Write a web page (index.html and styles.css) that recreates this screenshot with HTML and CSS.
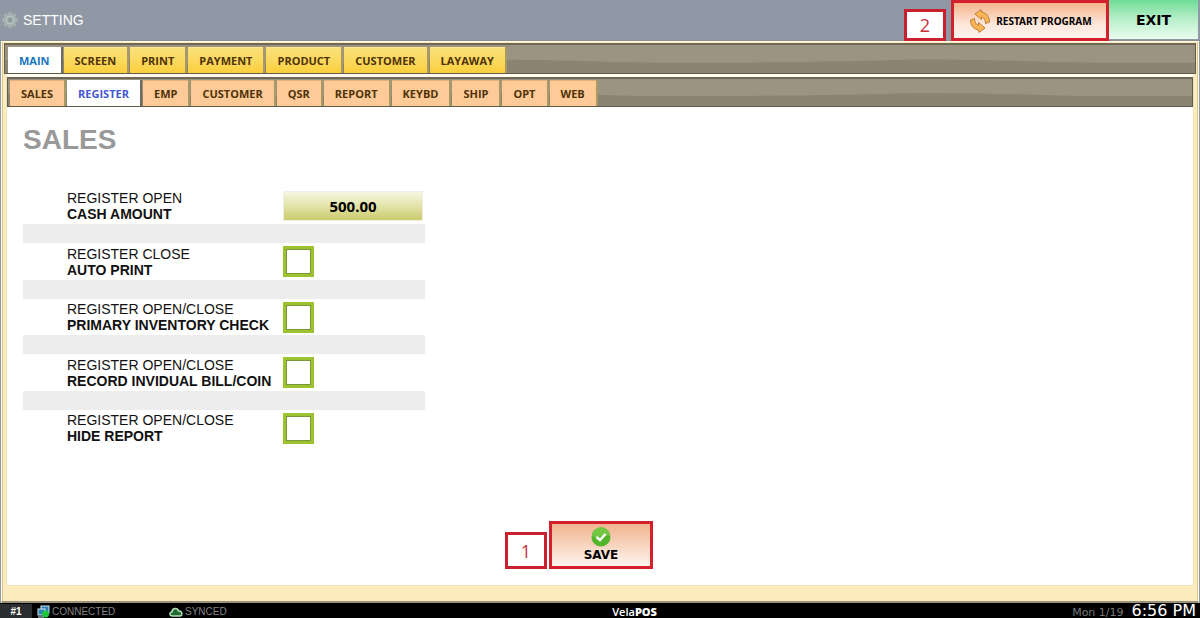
FILE: index.html
```html
<!DOCTYPE html>
<html lang="en">

<head>
  <meta charset="UTF-8">
  <meta name="viewport" content="width=device-width, initial-scale=1.0">
  <title>VelaPOS - Setting</title>
  <link rel="stylesheet" href="styles.css">
</head>

<body>
<header class="topbar">
  <svg class="gear" width="18" height="18" viewBox="0 0 18 18">
    <g fill="#a3b0ae">
      <rect x="7" y="1" width="4" height="16" rx="1"/>
      <rect x="7" y="1" width="4" height="16" rx="1" transform="rotate(45 9 9)"/>
      <rect x="7" y="1" width="4" height="16" rx="1" transform="rotate(90 9 9)"/>
      <rect x="7" y="1" width="4" height="16" rx="1" transform="rotate(135 9 9)"/>
      <circle cx="9" cy="9" r="6"/>
    </g>
    <circle cx="9" cy="9" r="4" fill="none" stroke="#bcc8c4"/>
    <circle cx="9" cy="9" r="2" fill="#8b969f"/>
  </svg>
  <span class="topbar-title">SETTING</span>
  <span class="step step-restart">2</span>
  <button class="btn-restart marked" type="button">
    <svg width="24" height="26" viewBox="0 0 24 26" fill="#fbb552" stroke="#b9803a" stroke-width="1" stroke-linejoin="round">
      <path d="M7 6L13 1.500L13.500 4C18 4.500 21.500 8.500 21.500 14L17.500 15.500C17.500 11.500 16 9.500 13.500 9L13.500 11.500Z"/>
      <path d="M17 20L11 24.500L10.500 22C6 21.500 2.500 17.500 2.500 12L6.500 10.500C6.500 14.500 8 16.500 10.500 17L10.500 14.500Z"/>
    </svg>
    RESTART PROGRAM
  </button>
  <button class="btn-exit" type="button">EXIT</button>
</header>

<main class="frame">
  <nav class="tabs tabs-main">
    <button class="tab active" type="button">MAIN</button>
    <button class="tab" type="button">SCREEN</button>
    <button class="tab" type="button">PRINT</button>
    <button class="tab" type="button">PAYMENT</button>
    <button class="tab" type="button">PRODUCT</button>
    <button class="tab" type="button">CUSTOMER</button>
    <button class="tab" type="button">LAYAWAY</button>
  </nav>
  <div class="inner">
    <nav class="tabs tabs-sub">
      <button class="tab" type="button">SALES</button>
      <button class="tab active" type="button">REGISTER</button>
      <button class="tab" type="button">EMP</button>
      <button class="tab" type="button">CUSTOMER</button>
      <button class="tab" type="button">QSR</button>
      <button class="tab" type="button">REPORT</button>
      <button class="tab" type="button">KEYBD</button>
      <button class="tab" type="button">SHIP</button>
      <button class="tab" type="button">OPT</button>
      <button class="tab" type="button">WEB</button>
    </nav>
    <form class="panel">
      <h1>SALES</h1>
      <div class="settings">
        <div class="setting">
          <label for="cash">REGISTER OPEN<b>CASH AMOUNT</b></label>
          <input class="amount" type="text" id="cash" value="500.00">
        </div>
        <div class="stripe"></div>
        <div class="setting">
          <label for="autoprint">REGISTER CLOSE<b>AUTO PRINT</b></label>
          <input class="check" type="checkbox" id="autoprint">
        </div>
        <div class="stripe"></div>
        <div class="setting">
          <label for="inventory">REGISTER OPEN/CLOSE<b>PRIMARY INVENTORY CHECK</b></label>
          <input class="check" type="checkbox" id="inventory">
        </div>
        <div class="stripe"></div>
        <div class="setting">
          <label for="bill">REGISTER OPEN/CLOSE<b>RECORD INVIDUAL BILL/COIN</b></label>
          <input class="check" type="checkbox" id="bill">
        </div>
        <div class="stripe"></div>
        <div class="setting">
          <label for="hide">REGISTER OPEN/CLOSE<b>HIDE REPORT</b></label>
          <input class="check" type="checkbox" id="hide">
        </div>
      </div>
      <div class="actions">
        <span class="step">1</span>
        <button class="btn-save marked" type="button">
          <svg width="20" height="20" viewBox="0 0 20 20">
            <circle cx="10" cy="10" r="9.500" fill="#53b52b"/>
            <path d="M1 9A9 9 0 0 1 19 9C14 7 6 12 1 9Z" fill="#74c745"/>
            <path d="M5.500 10L9 13L14.500 7" fill="none" stroke="#fff" stroke-width="2.500"/>
          </svg>
          SAVE
        </button>
      </div>
    </form>
  </div>
</main>

<footer class="status">
  <span class="station">#1</span>
  <span class="connection">
    <svg width="13" height="13" viewBox="0 0 13 13">
      <rect x="4" y="1" width="8" height="7" fill="#2f7fb0" stroke="#cfe8f2"/>
      <rect x="1" y="4" width="7" height="6" fill="#2f7fb0" stroke="#cfe8f2"/>
      <path d="M1 12H7" stroke="#cfe8f2"/>
      <circle cx="8.500" cy="9" r="3.500" fill="#1cc93a"/>
    </svg>
    CONNECTED
  </span>
  <span class="sync">
    <svg width="14" height="10" viewBox="0 0 14 10">
      <path d="M3.500 9C0 9 .500 5 3 5C3 1 8.500 0 9.500 4C13.500 3.500 14 9 11 9Z" fill="#1d6b33" stroke="#b5dcb4" stroke-width="1.500"/>
    </svg>
    SYNCED
  </span>
  <span class="brand">Vela<b>POS</b></span>
  <span class="clock"><span class="date">Mon 1/19</span><time>6:56 PM</time></span>
</footer>
</body>

</html>
```
FILE: styles.css
```css
* {
  box-sizing: border-box;
}

body {
  display: flex;
  flex-direction: column;
  min-height: 100vh;
  margin: 0;
  background: #9097a5;
  color: #111;
  font-family: "Liberation Sans", Arial, sans-serif;
  font-size: 14px;
}

button, input {
  margin: 0;
  padding: 0;
  border: 0;
  border-radius: 0;
  color: #000;
  font-family: "Noto Sans", Tahoma, sans-serif;
  font-weight: bold;
}

/* top bar */
.topbar {
  display: flex;
  align-items: flex-start;
  height: 41px;
  padding-right: 2px;
  border-bottom: 1px solid #8b908e;
}

.gear {
  margin: 11px 4px 0 1px;
}

.topbar-title {
  color: #fff;
  line-height: 40px;
}

.marked {
  border: 3px solid #d3202c;
}

.step {
  display: flex;
  align-items: center;
  justify-content: center;
  width: 42px;
  height: 37px;
  border: 3px solid #c8202e;
  background: #fff;
  color: #c8303c;
  font-family: "Open Sans", Calibri, sans-serif;
  font-size: 18px;
}

.step-restart {
  height: 32px;
  margin: 9px 5px 0 auto;
}

.btn-restart {
  display: flex;
  align-items: center;
  justify-content: center;
  gap: 4px;
  width: 158px;
  height: 41px;
  background: linear-gradient(#f6b48c, #fde6da 60%, #fff3ee);
  font-size: 10px;
}

.btn-exit {
  width: 89px;
  height: 39px;
  background: linear-gradient(#6fdc96, #b9efcb 50%, #e9fcef);
  font-family: "DejaVu Sans", Verdana, sans-serif;
  font-size: 14px;
}

/* frames */
.frame {
  display: flex;
  flex-direction: column;
  flex: 1;
  margin: 0 1px;
  padding: 1px 2px 0 2px;
  border: 1px solid #fffbe6;
  border-bottom: 2px solid #9a917c;
  background: #fcebbd;
  box-shadow: inset 1px 0 #d8c690, inset -1px 0 #d8c690;
}

.inner {
  display: flex;
  flex-direction: column;
  flex: 1;
  margin: 0 2px 15px 2px;
  border: 1px solid #efe2b8;
  border-top: 3px solid #fffdf0;
}

.tabs {
  display: flex;
  align-items: flex-end;
  gap: 3px;
  height: 31px;
  padding-left: 3px;
  border: 1px solid #5f5a49;
  border-top: 2px solid #6e6854;
  background: url("data:image/svg+xml,%3Csvg xmlns='http://www.w3.org/2000/svg' width='440' height='30' viewBox='0 0 440 30' preserveAspectRatio='none'%3E%3Cpath fill='%238b8473' d='M0 16C80 14 150 19 220 19S360 18 440 16V30H0Z'/%3E%3C/svg%3E") 450px 0 / 440px 100% repeat-x #9b9482;
}

.tabs-sub {
  height: 30px;
  padding-left: 2px;
}

.tab {
  height: 26px;
  padding: 0 11px 1px 11px;
  border-top: 1px solid #ffe58e;
  background: linear-gradient(#fbe07a, #fbd95f 50%, #fbcf3c);
  box-shadow: 2px 0 #a99a62;
  color: #4f3207;
  font-family: "Open Sans", "Segoe UI", sans-serif;
  font-size: 11px;
}

.tabs-sub .tab {
  border-top-color: #e9ae78;
  background: #fdca98;
}

.tab.active,
.tabs-sub .tab.active {
  border-top-color: #fff;
  background: #fff;
  box-shadow: 2px 0 #6f6a5a;
  color: #1876bd;
}

.tabs-sub .tab.active {
  color: #4356d6;
}

.panel {
  display: flex;
  flex-direction: column;
  flex: 1;
  padding: 16px 16px;
  background: #fff;
}

h1 {
  margin: 0;
  color: #999;
  font-size: 28px;
  line-height: 34px;
}

/* settings list */
.settings {
  display: flex;
  flex-direction: column;
  justify-content: space-between;
  width: 402px;
  max-width: 100%;
  height: 254px;
  margin-top: 33px;
}

.setting {
  display: flex;
  align-items: center;
  height: 32px;
  padding: 0 2px 0 44px;
}

.setting label {
  width: 216px;
  line-height: 16px;
  white-space: nowrap;
}

.setting b {
  display: block;
}

.stripe {
  height: 19px;
  background: #ededed;
}

.amount {
  flex: 1;
  min-width: 0;
  height: 30px;
  padding-bottom: 1px;
  border: 1px solid #f0f0e6;
  background: linear-gradient(#f6f7e4, #e2e3a8 50%, #cccb6c);
  font-size: 15px;
  text-align: center;
}

.check {
  appearance: none;
  width: 31px;
  height: 31px;
  border: 3px solid #9dc22f;
  outline: 1px solid #7a983a;
  outline-offset: -4px;
  background: #fff;
}

.check:checked {
  background: #9dc22f;
  box-shadow: inset 0 0 0 5px #fff;
}

.actions {
  display: flex;
  align-items: flex-end;
  justify-content: center;
  gap: 2px;
  margin: auto 42px 0 0;
}

.btn-save {
  display: flex;
  flex-direction: column;
  align-items: center;
  justify-content: center;
  width: 104px;
  height: 48px;
  background: linear-gradient(#f1b48e, #f8d8c4 55%, #fff4ee);
  font-family: "DejaVu Sans", Verdana, sans-serif;
  font-size: 12px;
  line-height: 16px;
}

/* status bar */
.status {
  display: grid;
  grid-template-columns: 32px 136px 9fr auto 11fr;
  align-items: center;
  height: 15px;
  background: #000;
  color: #858585;
  font-size: 10px;
  line-height: 15px;
}

.station {
  background: #2b2d2f;
  color: #fff;
  font-weight: bold;
  text-align: center;
}

.connection, .sync {
  display: flex;
  align-items: center;
  gap: 2px;
  padding-left: 5px;
}

.sync {
  padding-left: 1px;
}

.brand {
  color: #fff;
  font-family: "Open Sans", sans-serif;
  font-size: 11px;
  font-weight: 600;
}

.clock {
  display: flex;
  align-items: baseline;
  justify-content: flex-end;
  gap: 8px;
  padding-right: 4px;
  color: #fff;
  font-family: "DejaVu Sans", sans-serif;
  font-size: 16px;
}

.date {
  color: #777;
  font-size: 11px;
}
```
